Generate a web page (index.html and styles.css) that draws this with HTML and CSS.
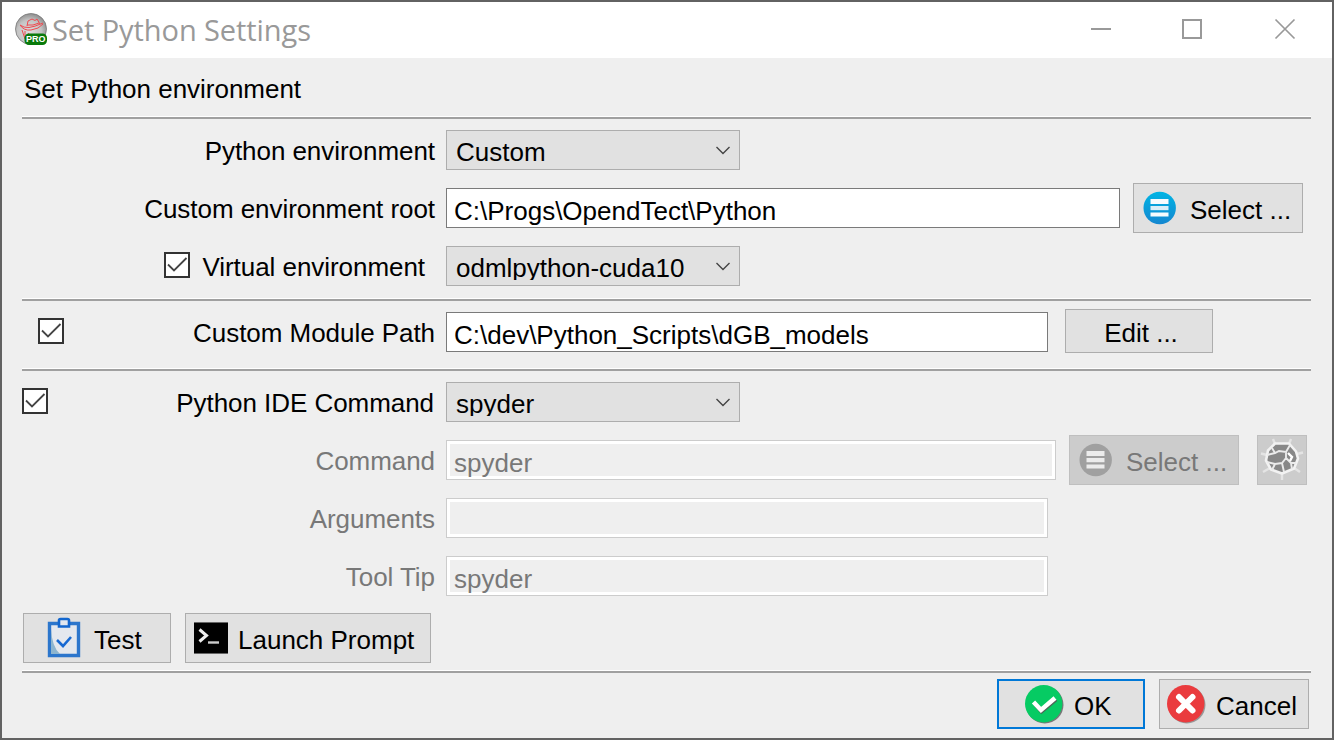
FILE: index.html
```html
<!DOCTYPE html>
<html lang="en">
<head>
<meta charset="utf-8">
<title>Set Python Settings</title>
<link rel="stylesheet" href="styles.css">
</head>
<body>
<svg class="defs" width="0" height="0">
  <defs>
    <symbol id="chevron" viewBox="0 0 16 10"><path d="M1.500 2 8 8.500l6.500-6.500" fill="none" stroke="#444" stroke-width="1.400"/></symbol>
    <symbol id="tick" viewBox="0 0 22 22"><path d="M2 10.500 8 16.500 20.500 4" fill="none" stroke="#444" stroke-width="1.800"/></symbol>
  </defs>
</svg>
<div class="window">
  <header class="titlebar">
    <svg class="app-icon" viewBox="0 0 34 34">
      <defs><radialGradient id="ball" cx=".45" cy=".6" r=".6"><stop offset="0" stop-color="#ddd"/><stop offset=".65" stop-color="#c4c4c4"/><stop offset="1" stop-color="#8e8e8e"/></radialGradient></defs>
      <circle cx="16" cy="16" r="15.500" fill="url(#ball)" stroke="#777" stroke-width=".8"/>
      <path d="M5 12q4 3 9 2.500T28 10M12 13l1-5 4-2 3 1.500L22 6l3 5M5 12q4 6 11 5 8-1 12-6M12 12q6 1 12-2M7 17l3 9M10 18l0 7 4-5" fill="none" stroke="#ee4a50" stroke-width="1"/>
      <rect x="9.500" y="20.500" width="22.500" height="11.500" rx="4.500" fill="#087a0b"/>
      <text x="20.800" y="29.400" text-anchor="middle" class="pro">PRO</text>
    </svg>
    <h1 class="title">Set Python Settings</h1>
    <svg class="controls" width="206" height="22" viewBox="0 0 206 22" fill="none" stroke="#999" stroke-width="2">
      <path d="M1 11h20M93 2h18v18h-18z"/><path d="M185.500 1.500l19 19m0-19l-19 19" stroke-width="1.700"/>
    </svg>
  </header>
  <main class="body">
    <h2 class="heading">Set Python environment</h2>
    <hr class="sep">
    <section class="group env">
      <div class="row"><span class="label">Python environment</span>
        <div class="combo"><span class="value">Custom</span><svg class="chev"><use href="#chevron"/></svg></div></div>
      <div class="row"><span class="label">Custom environment root</span>
        <div class="field wide"><span class="value">C:\Progs\OpendTect\Python</span></div>
        <button class="btn select"><svg class="list-icon" viewBox="0 0 34 34">
          <defs><linearGradient id="blue" x2="0" y2="1"><stop offset="0" stop-color="#00b4e4"/><stop offset="1" stop-color="#1587d0"/></linearGradient></defs>
          <circle cx="16.700" cy="17" r="16.200" fill="url(#blue)"/><path d="M7.500 8h18v5h-18zM7.500 21.500h18v4h-18z" fill="#f6fbfe"/><path d="M7.500 15h18v4.200h-18z" fill="#d9eef8"/></svg>Select ...</button></div>
      <div class="row"><span class="label venv"><span class="check"><svg><use href="#tick"/></svg></span>Virtual environment</span>
        <div class="combo"><span class="value">odmlpython-cuda10</span><svg class="chev"><use href="#chevron"/></svg></div></div>
    </section>
    <hr class="sep">
    <section class="group module">
      <div class="row"><span class="label spread inset"><span class="check"><svg><use href="#tick"/></svg></span>Custom Module Path</span>
        <div class="field"><span class="value">C:\dev\Python_Scripts\dGB_models</span></div>
        <button class="btn edit">Edit ...</button></div>
    </section>
    <hr class="sep">
    <section class="group ide">
      <div class="row"><span class="label spread command-label"><span class="check"><svg><use href="#tick"/></svg></span>Python IDE Command</span>
        <div class="combo"><span class="value">spyder</span><svg class="chev"><use href="#chevron"/></svg></div></div>
      <div class="row disabled"><span class="label">Command</span>
        <div class="field command"><span class="value">spyder</span></div>
        <button class="btn select" disabled><svg class="list-icon" viewBox="0 0 34 34"><circle cx="16.700" cy="17" r="16.200" fill="#a0a0a0"/><path d="M7.500 8h18v5h-18zM7.500 15h18v4.200h-18zM7.500 21.500h18v4h-18z" fill="#ececec"/></svg>Select ...</button>
        <button class="btn icon-only" disabled><svg class="wheel" viewBox="0 0 48 48">
          <g fill="none" stroke="#e4e4e4" stroke-width="2.400"><path d="M17 8 15 3M31 8l2-5M39 18l6-1.500M36 32l6 4M24 38v6M12 32l-7 4M9 19l-6-1.500"/></g>
          <path d="M17 7.500h14l7 8 2 7-4 10-12 5-11-4-5-9 2-10z" fill="#888" stroke="#f2f2f2" stroke-width="2.600" stroke-linejoin="round"/>
          <path d="M9 19l8-2 4-2 7 1 4-7M17 17l-3-5M28 16l0 6-4 5-7 1-8-2M24 27l2 9M17 28l-3 6M28 22l5 5 5 0M33 27l1 6" fill="none" stroke="#ebebeb" stroke-width="1.900"/>
          <path d="M30 17l4 4-2 4" fill="none" stroke="#fff" stroke-width="2.400"/></svg></button></div>
      <div class="row disabled"><span class="label">Arguments</span><div class="field"></div></div>
      <div class="row disabled"><span class="label">Tool Tip</span><div class="field"><span class="value">spyder</span></div></div>
    </section>
    <div class="tools">
      <button class="btn test"><svg class="clip" viewBox="0 0 34 42">
        <path d="M2.500 6.500h29v32h-29z" fill="#e4e8ee" stroke="#2c76cc" stroke-width="3.400"/><path d="M4 12v25h9Q5 30 4 12z" fill="#8db5cf"/>
        <path d="M12 9.500v-6q0-1.500 1.500-1.500h7q1.500 0 1.500 1.500v6z" fill="#e2e7ef" stroke="#1367cf" stroke-width="2.600"/>
        <path d="M10 23l6 6 8-9" fill="none" stroke="#1769d2" stroke-width="2.600"/></svg>Test</button>
      <button class="btn prompt"><svg class="term" viewBox="0 0 34 32"><rect width="34" height="32" rx="1"/><path d="M0 .5h34M0 31.500h34" stroke="#666"/><path d="M5.500 7.500l7 6-7 6" fill="none" stroke="#eee" stroke-width="3"/><path d="M14 20.500h11" stroke="#ccc" stroke-width="2.400"/></svg>Launch Prompt</button>
    </div>
    <hr class="sep">
    <footer class="actions">
      <button class="btn ok"><svg class="round" viewBox="0 0 40 40"><circle cx="20.800" cy="20.800" r="18.700" fill="#777"/><circle cx="19.700" cy="19.700" r="18.700" fill="#06cb63"/><path d="M11 20l6.500 7.500L32 15.500" fill="none" stroke="#4b6857" stroke-width="4"/><path d="M9.500 18l7.500 8L31 14" fill="none" stroke="#fff" stroke-width="4.500"/></svg>OK</button>
      <button class="btn cancel"><svg class="round" viewBox="0 0 40 40"><circle cx="20.800" cy="20.800" r="18.700" fill="#999"/><circle cx="19.700" cy="19.700" r="18.700" fill="#ea3b3e"/><path d="M13 13l13.500 13.500M26.500 13L13 26.500" fill="none" stroke="#fff" stroke-width="6" stroke-linecap="round"/></svg>Cancel</button>
    </footer>
  </main>
</div>
</body>
</html>
```
FILE: styles.css
```css
* { box-sizing: border-box; }
body { margin: 0; font: 26px/30px "Liberation Sans", Arial, sans-serif; color: #000; }
.defs { display: block; height: 0; }
.window { width: 1334px; height: 740px; border: 2px solid #626262; background: #efefef; overflow: hidden; }
.titlebar { height: 56px; background: #fff; display: flex; align-items: center; padding: 0 36px 0 13px; }
.app-icon { width: 34px; height: 34px; }
.pro { font: bold 9px "Liberation Sans", Arial, sans-serif; fill: #fff; }
.title { margin: 0 0 0 3px; font: 29px/40px "Open Sans", "Noto Sans", sans-serif; letter-spacing: -0.08px; color: #999; white-space: nowrap; }
.controls { margin-left: auto; margin-top: -2px; }
.body { padding: 0 21px 0 20px; }
.heading { height: 58px; margin: 0; padding: 16px 0 0 2px; font-size: 26px; font-weight: 400; letter-spacing: -0.02px; }
.sep { height: 3px; margin: 0; border: 0; border-top: 1px solid #fff; background: #a0a0a0; }
.group { display: flex; flex-direction: column; }
.env { padding: 2px 0 3px; }
.module { padding: 2px 0 7px; }
.ide { padding: 2px 0 8px; }
.row { display: flex; align-items: center; height: 58px; }
.label { display: flex; justify-content: flex-end; align-items: center; width: 413px; margin-right: 11px; padding-top: 2px; letter-spacing: -0.05px; white-space: nowrap; }
.venv { padding-right: 10px; gap: 12px; }
.spread { justify-content: space-between; }
.inset { padding-left: 16px; }
.command-label { padding-right: 1px; }
.check { width: 26px; height: 26px; border: 2px solid #333; background: #fff; margin-top: -4px; }
.check svg { display: block; width: 22px; height: 22px; }
.combo { display: flex; align-items: center; width: 294px; height: 40px; padding: 0 8px 0 9px; border: 1px solid #adadad; background: #e1e1e1; }
.combo .value { flex: 1; height: 26px; line-height: 28px; overflow: hidden; margin-top: 1px; }
.chev { width: 16px; height: 10px; }
.field { width: 602px; height: 40px; padding: 7px 7px 0; border: 1px solid #7a7a7a; background: #fff; overflow: hidden; white-space: nowrap; }
.field .value { display: block; height: 29px; overflow: hidden; }
.wide { width: 674px; margin-right: 13px; }
.command { width: 610px; margin-right: 13px; }
.disabled { color: #787878; }
.disabled .field { border-color: #ccc; background: #efefef; box-shadow: inset 0 0 0 3px #fff; }
.btn { display: flex; align-items: center; height: 50px; margin: 0; padding: 3px 0 0; border: 1px solid #adadad; border-radius: 0; background: #e1e1e1; color: #000; font: inherit; white-space: nowrap; }
.btn svg { margin-top: -3px; flex: none; }
.btn:disabled { background: #ccc; border-color: #bfbfbf; color: #787878; }
.select { width: 170px; padding-left: 9px; gap: 13px; }
.list-icon { width: 34px; height: 34px; }
.edit { width: 148px; height: 44px; margin: -2px 0 0 17px; padding-left: 4px; justify-content: center; }
.icon-only { width: 50px; margin-left: 18px; justify-content: center; }
.wheel { width: 48px; height: 48px; }
.tools { display: flex; gap: 14px; height: 57px; padding-left: 1px; }
.test { width: 148px; padding-left: 23px; gap: 13px; }
.clip { width: 34px; height: 42px; }
.prompt { width: 246px; padding-left: 8px; gap: 10px; }
.term { width: 34px; height: 32px; }
.actions { display: flex; justify-content: flex-end; gap: 14px; padding: 6px 2px 0 0; }
.ok { width: 148px; padding-left: 25px; gap: 10px; border: 2px solid #0078d7; }
.cancel { width: 150px; padding-left: 6px; gap: 10px; }
.round { width: 40px; height: 40px; }
```
